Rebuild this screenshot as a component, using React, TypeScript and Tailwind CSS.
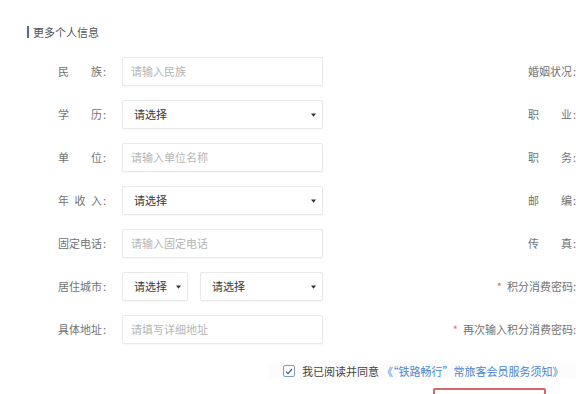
import type { ReactNode } from 'react'

type Row = {
  left: string[]
  kind: 'input' | 'select' | 'city'
  text: string
  right: string[]
  required?: boolean
}

const rows: Row[] = [
  { left: ['民', '族'], kind: 'input', text: '请输入民族', right: ['婚', '姻', '状', '况'] },
  { left: ['学', '历'], kind: 'select', text: '请选择', right: ['职', '业'] },
  { left: ['单', '位'], kind: 'input', text: '请输入单位名称', right: ['职', '务'] },
  { left: ['年', '收', '入'], kind: 'select', text: '请选择', right: ['邮', '编'] },
  { left: ['固', '定', '电', '话'], kind: 'input', text: '请输入固定电话', right: ['传', '真'] },
  { left: ['居', '住', '城', '市'], kind: 'city', text: '请选择', right: ['积分消费密码'], required: true },
  { left: ['具', '体', '地', '址'], kind: 'input', text: '请填写详细地址', right: ['再次输入积分消费密码'], required: true },
]

function Label({ chars }: { chars: string[] }) {
  return (
    <div className="flex items-center">
      <div className="w-[44px] flex justify-between">
        {chars.map((c, i) => (
          <span key={i}>{c}</span>
        ))}
      </div>
      <span className="ml-[1px]">:</span>
    </div>
  )
}

function Box({ className, children }: { className: string; children: ReactNode }) {
  return (
    <div
      className={`h-[29px] border border-[#e9e9e9] rounded-[2px] bg-white shadow-[0_1px_2px_rgba(0,0,0,0.04)] flex items-center ${className}`}
    >
      {children}
    </div>
  )
}

function Caret() {
  return (
    <svg width="5" height="4" viewBox="0 0 5 4" className="shrink-0">
      <path d="M0 0.5 L5 0.5 L2.5 3.8 Z" fill="#333" />
    </svg>
  )
}

function Select({ className }: { className: string }) {
  return (
    <Box className={`pl-[11px] pr-[6px] justify-between text-[#3a3a3a] ${className}`}>
      <span>请选择</span>
      <Caret />
    </Box>
  )
}

export default function App() {
  return (
    <div
      className="w-[576px] h-[394px] overflow-hidden bg-white text-[11px] leading-none text-[#737373]"
      style={{ fontFamily: '"Noto Sans CJK SC", "Noto Sans", sans-serif' }}
    >
      {/* Header */}
      <div className="pt-[26px] pl-[27px] flex items-center gap-[4px]">
        <div className="w-[2px] h-[12px] bg-[#4a6fa8]" />
        <span className="text-[#555]">更多个人信息</span>
      </div>

      {/* Form rows */}
      <div className="mt-[19px] flex flex-col gap-[14px]">
        {rows.map((r, i) => (
          <div key={i} className="flex items-center h-[29px]">
            <div className="w-[122px] pl-[58px]">
              <Label chars={r.left} />
            </div>
            {r.kind === 'input' && (
              <Box className="w-[201px] pl-[8px] text-[#b5b5b5]">
                <span>{r.text}</span>
              </Box>
            )}
            {r.kind === 'select' && <Select className="w-[201px]" />}
            {r.kind === 'city' && (
              <div className="flex gap-[12px]">
                <Select className="w-[66px]" />
                <Select className="w-[123px]" />
              </div>
            )}
            <div className="flex-1 flex justify-end items-center">
              {r.required ? (
                <div className="flex items-center">
                  <span className="text-[#e26a6a] mr-[5px]">*</span>
                  <span>{r.right[0]}:</span>
                </div>
              ) : (
                <Label chars={r.right} />
              )}
            </div>
          </div>
        ))}
      </div>

      {/* Agreement */}
      <div className="mt-[19px] ml-[270px] pl-[13px] h-[16px] flex items-center bg-[#fcfcfc]">
        <div className="w-[12px] h-[12px] border border-[#7f9cc4] rounded-[2px] flex items-center justify-center bg-white">
          <svg width="8" height="7" viewBox="0 0 8 7">
            <path d="M1 3.6 L3 5.6 L7 1" fill="none" stroke="#3d5f91" strokeWidth="1.3" />
          </svg>
        </div>
        <span className="ml-[7px] text-[#444]">我已阅读并同意</span>
        <span className="ml-[3px] text-[#4a86cf]">《“铁路畅行”常旅客会员服务须知》</span>
      </div>

      {/* Submit button outline */}
      <div className="mt-[9px] ml-[433px] w-[113px] h-[30px] border-2 border-[#d76565] rounded-[2px]" />
    </div>
  )
}
